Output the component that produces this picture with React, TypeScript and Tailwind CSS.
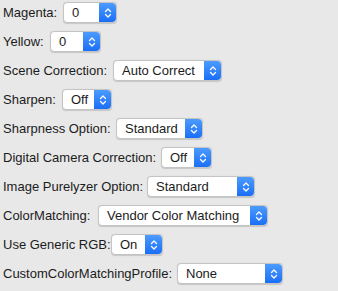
const rows = [
  { label: "Magenta:", labelW: "w-[60px]", selW: "w-[54px]", value: "0" },
  { label: "Yellow:", labelW: "w-[47px]", selW: "w-[51px]", value: "0" },
  { label: "Scene Correction:", labelW: "w-[110px]", selW: "w-[109px]", value: "Auto Correct" },
  { label: "Sharpen:", labelW: "w-[59px]", selW: "w-[50px]", value: "Off" },
  { label: "Sharpness Option:", labelW: "w-[113px]", selW: "w-[87px]", value: "Standard" },
  { label: "Digital Camera Correction:", labelW: "w-[158px]", selW: "w-[51px]", value: "Off" },
  { label: "Image Purelyzer Option:", labelW: "w-[144px]", selW: "w-[108px]", value: "Standard" },
  { label: "ColorMatching:", labelW: "w-[95px]", selW: "w-[170px]", value: "Vendor Color Matching" },
  { label: "Use Generic RGB:", labelW: "w-[108px]", selW: "w-[52px]", value: "On" },
  { label: "CustomColorMatchingProfile:", labelW: "w-[174px]", selW: "w-[106px]", value: "None" },
];

function Stepper() {
  return (
    <div className="flex h-full w-[17px] shrink-0 items-center justify-center rounded-r-[4px] bg-gradient-to-b from-[#4b9bfd] to-[#1a6ef6]">
      <svg width="8" height="12" viewBox="0 0 8 12" fill="none" stroke="white" strokeWidth="1.3" strokeLinecap="round" strokeLinejoin="round">
        <path d="M1.5 4.5 L4 2 L6.5 4.5" />
        <path d="M1.5 7.5 L4 10 L6.5 7.5" />
      </svg>
    </div>
  );
}

function PopUp({ width, value }: { width: string; value: string }) {
  return (
    <div className={`${width} flex h-[21px] items-stretch rounded-[4px] border border-[#c4c4c4] bg-white shadow-[0_0.5px_1px_rgba(0,0,0,0.15)]`}>
      <span className="flex flex-1 items-center overflow-hidden whitespace-nowrap pl-[8px] text-[#1b1b1b]">{value}</span>
      <Stepper />
    </div>
  );
}

export default function App() {
  return (
    <div className="h-[291px] w-[338px] bg-[#e8e8e8] pl-[3px] pt-[2px] font-['Liberation_Sans',Arial,sans-serif] text-[13px] text-[#1b1b1b]">
      <div className="flex flex-col gap-[8px]">
        {rows.map((r) => (
          <div key={r.label} className="flex items-center">
            <span className={`${r.labelW} shrink-0 whitespace-nowrap`}>{r.label}</span>
            <PopUp width={r.selW} value={r.value} />
          </div>
        ))}
      </div>
    </div>
  );
}
